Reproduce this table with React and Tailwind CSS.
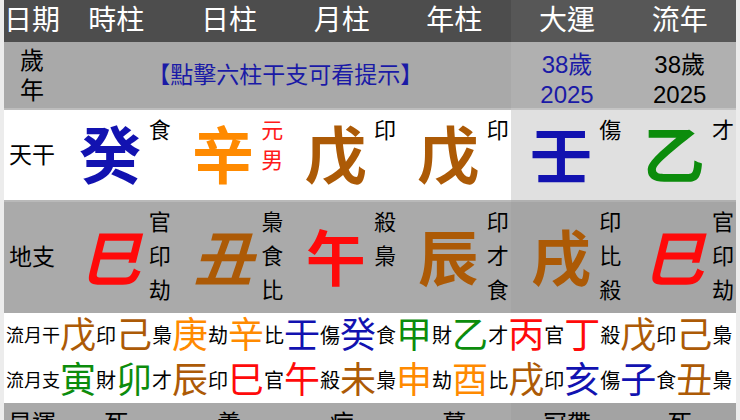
const FONT = "font-['Liberation_Sans','Noto_Sans_CJK_TC',sans-serif]";

const BLUE = "text-[#1212b0]";
const ORANGE = "text-[#ff8a00]";
const BROWN = "text-[#ac5a06]";
const GREEN = "text-[#0c8c0c]";
const RED = "text-[#ff0a0a]";

const HEAD = ["時柱", "日柱", "月柱", "年柱", "大運", "流年"];

const PILLARS = [
  { gan: "癸", ganColor: BLUE, ganNote: ["食"], zhi: "巳", zhiColor: RED, slant: true, zhiNote: ["官", "印", "劫"], star: "死" },
  { gan: "辛", ganColor: ORANGE, ganNote: ["元", "男"], noteRed: true, zhi: "丑", zhiColor: BROWN, slant: true, zhiNote: ["梟", "食", "比"], star: "養" },
  { gan: "戊", ganColor: BROWN, ganNote: ["印"], zhi: "午", zhiColor: RED, zhiNote: ["殺", "梟"], star: "病" },
  { gan: "戊", ganColor: BROWN, ganNote: ["印"], zhi: "辰", zhiColor: BROWN, zhiNote: ["印", "才", "食"], star: "墓" },
  { gan: "壬", ganColor: BLUE, ganNote: ["傷"], zhi: "戌", zhiColor: BROWN, zhiNote: ["印", "比", "殺"], star: "冠帶", side: true },
  { gan: "乙", ganColor: GREEN, ganNote: ["才"], zhi: "巳", zhiColor: RED, slant: true, zhiNote: ["官", "印", "劫"], star: "死", side: true },
];

const MONTH_GAN = [
  ["戊", BROWN, "印"], ["己", BROWN, "梟"], ["庚", ORANGE, "劫"], ["辛", ORANGE, "比"],
  ["壬", BLUE, "傷"], ["癸", BLUE, "食"], ["甲", GREEN, "財"], ["乙", GREEN, "才"],
  ["丙", RED, "官"], ["丁", RED, "殺"], ["戊", BROWN, "印"], ["己", BROWN, "梟"],
];

const MONTH_ZHI = [
  ["寅", GREEN, "財"], ["卯", GREEN, "才"], ["辰", BROWN, "印"], ["巳", RED, "官"],
  ["午", RED, "殺"], ["未", BROWN, "梟"], ["申", ORANGE, "劫"], ["酉", ORANGE, "比"],
  ["戌", BROWN, "印"], ["亥", BLUE, "傷"], ["子", BLUE, "食"], ["丑", BROWN, "梟"],
];

function MonthLine({ label, items }) {
  return (
    <div className="flex items-center h-[45px] pl-[2px] whitespace-nowrap">
      <span className="text-[18px] leading-none text-black">{label}</span>
      {items.map(([ch, color, note], i) => (
        <span key={i} className="flex items-center">
          <span className={`text-[36px] leading-none ${color}`}>{ch}</span>
          <span className="text-[20px] leading-none text-black">{note}</span>
        </span>
      ))}
    </div>
  );
}

export default function App() {
  return (
    <div className={`w-[740px] h-[420px] overflow-hidden bg-[#ececec] px-[4px] ${FONT}`}>
      <div className="grid grid-cols-[56px_repeat(6,1fr)]">
        {/* header */}
        <div className="h-[42px] bg-[#4d4d4d] text-white text-[28px] leading-[42px] whitespace-nowrap">日期</div>
        {HEAD.map((h, i) => (
          <div
            key={h}
            className={`h-[42px] text-white text-[28px] leading-[42px] text-center ${i > 3 ? "bg-[#575757]" : "bg-[#4d4d4d]"}`}
          >
            {h}
          </div>
        ))}

        {/* age / year */}
        <div className="h-[68px] bg-[#a9a9a9] border-b-2 border-[#bdbdbd] flex flex-col items-center pt-[4px] text-[24px] leading-[30px] text-black">
          <span>歲</span>
          <span>年</span>
        </div>
        <div className="col-span-4 h-[68px] bg-[#a9a9a9] border-b-2 border-[#bdbdbd] flex items-center justify-center text-[23px] text-[#1a1aa6]">
          【點擊六柱干支可看提示】
        </div>
        <div className="h-[68px] bg-[#b0b0b0] border-b-2 border-[#c4c4c4] flex flex-col items-center pt-[8px] text-[24px] leading-[30px] text-[#1a1aa6]">
          <span>38歲</span>
          <span>2025</span>
        </div>
        <div className="h-[68px] bg-[#b0b0b0] border-b-2 border-[#c4c4c4] flex flex-col items-center pt-[8px] text-[24px] leading-[30px] text-black">
          <span>38歲</span>
          <span>2025</span>
        </div>

        {/* heavenly stems */}
        <div className="h-[90px] bg-white flex items-center justify-center text-[23px] text-black">天干</div>
        {PILLARS.map((p, i) => (
          <div key={i} className={`h-[90px] flex ${p.side ? "bg-[#e0e0e0]" : "bg-white"}`}>
            <div className="flex-1 flex items-center justify-center pl-[12px] pt-[6px]">
              <span className={`text-[62px] font-bold leading-none ${p.ganColor}`}>{p.gan}</span>
            </div>
            <div className={`w-[24px] flex flex-col pt-[6px] text-[22px] leading-[30px] ${p.noteRed ? "text-[#ff1a1a]" : "text-black"}`}>
              {p.ganNote.map((n, j) => (
                <span key={j}>{n}</span>
              ))}
            </div>
          </div>
        ))}

        {/* earthly branches */}
        <div className="h-[113px] bg-[#aaaaaa] border-t-2 border-[#b9b9b9] flex items-center justify-center text-[23px] text-black">地支</div>
        {PILLARS.map((p, i) => (
          <div key={i} className={`h-[113px] flex border-t-2 ${p.side ? "bg-[#a5a5a5] border-[#b0b0b0]" : "bg-[#aaaaaa] border-[#b9b9b9]"}`}>
            <div className="flex-1 flex items-center justify-center pl-[12px] pt-[6px]">
              <span className={`text-[60px] font-bold leading-none ${p.slant ? "italic" : ""} ${p.zhiColor}`}>{p.zhi}</span>
            </div>
            <div className="w-[24px] flex flex-col pt-[4px] text-[22px] leading-[34px] text-black">
              {p.zhiNote.map((n, j) => (
                <span key={j}>{n}</span>
              ))}
            </div>
          </div>
        ))}

        {/* monthly flow */}
        <div className="col-span-7 h-[90px] bg-white flex flex-col">
          <MonthLine label="流月干" items={MONTH_GAN} />
          <MonthLine label="流月支" items={MONTH_ZHI} />
        </div>

        {/* twelve stages */}
        <div className="h-[60px] bg-[#a9a9a9] pt-[6px] text-[24px] leading-[30px] text-black text-center whitespace-nowrap">星運</div>
        {PILLARS.map((p, i) => (
          <div
            key={i}
            className={`h-[60px] pt-[6px] text-[24px] leading-[30px] text-black text-center ${p.side ? "bg-[#a3a3a3]" : "bg-[#a9a9a9]"}`}
          >
            {p.star}
          </div>
        ))}
      </div>
    </div>
  );
}
